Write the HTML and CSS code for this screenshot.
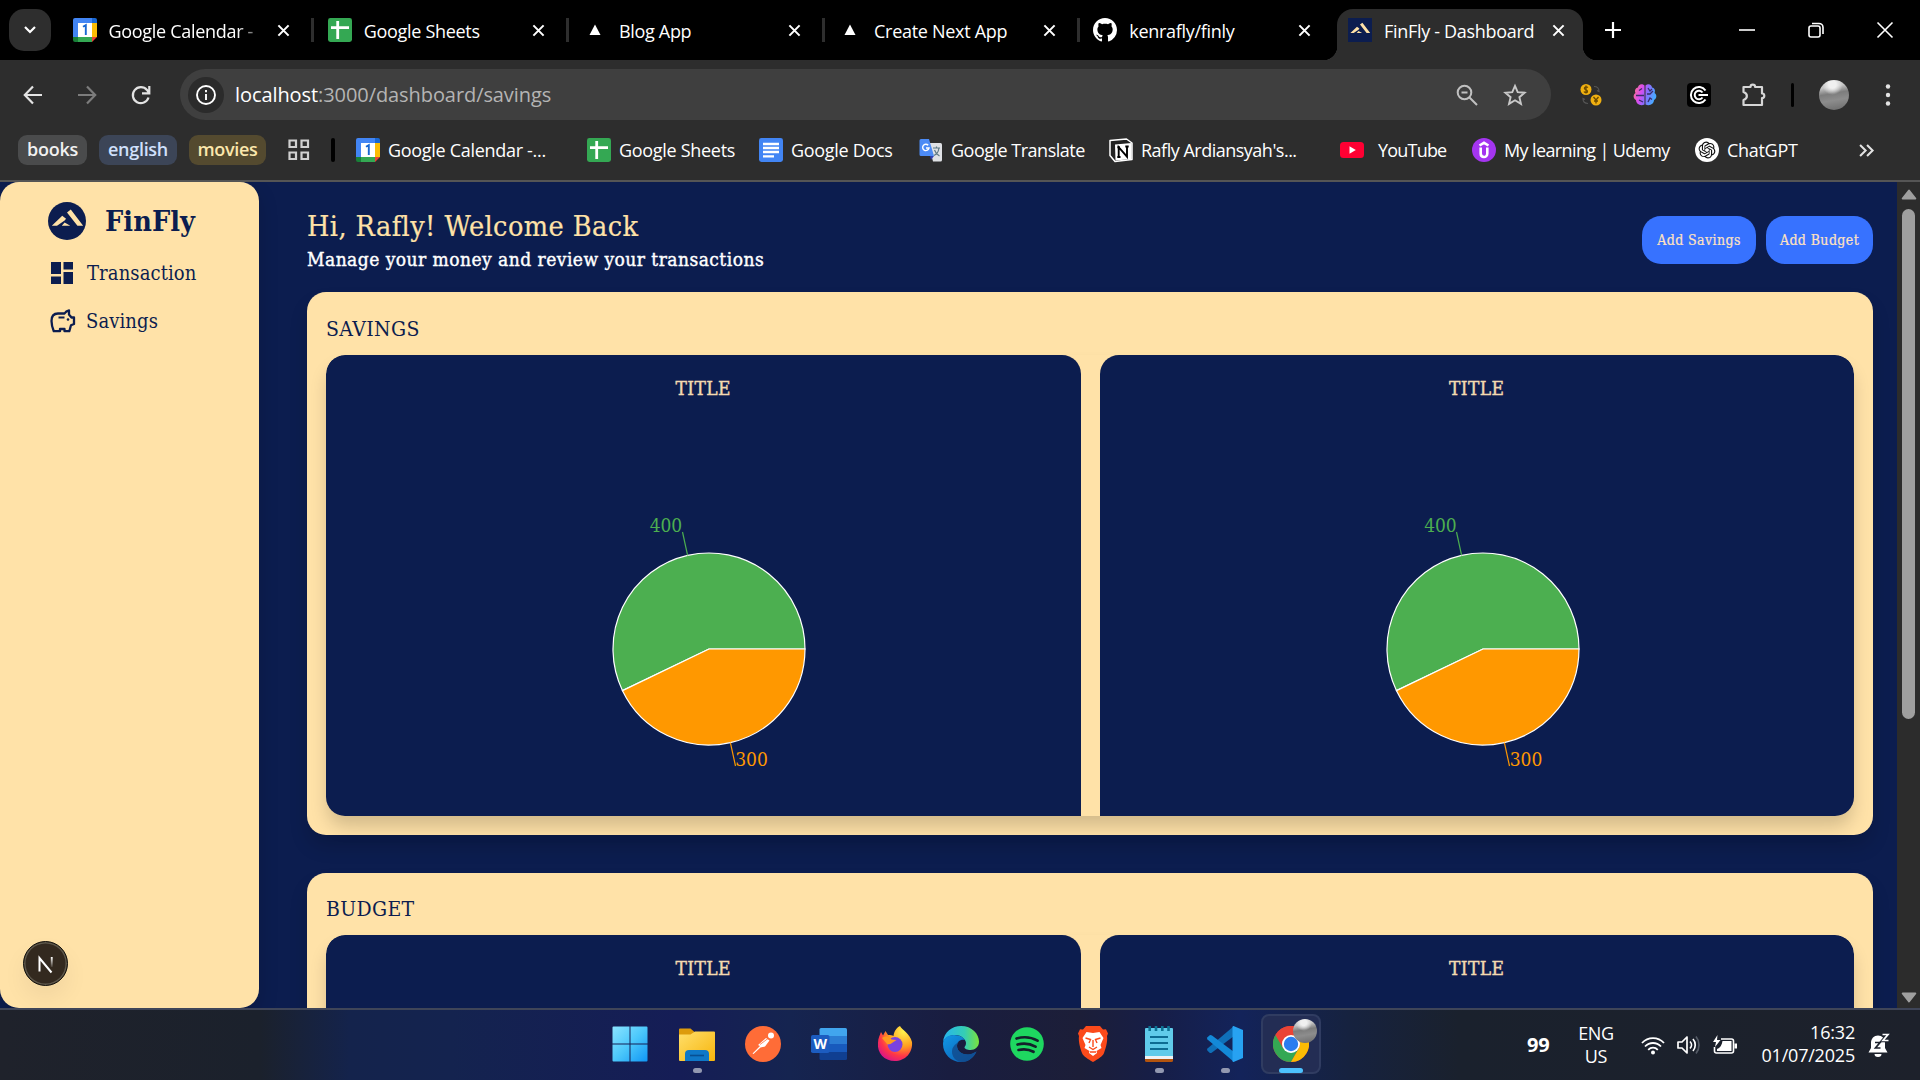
FILE: index.html
```html
<!DOCTYPE html>
<html lang="en">
<head>
<meta charset="utf-8">
<title>FinFly - Dashboard</title>
<link rel="stylesheet" href="styles.css">
</head>
<body>
<svg class="defs" aria-hidden="true">
  <symbol id="i-x" viewBox="0 0 14 14"><path d="M1.500 1.500l11 11M12.500 1.500l-11 11" stroke="#fff" stroke-width="2.200" fill="none"/></symbol>
  <symbol id="i-cal" viewBox="0 0 24 24"><path d="M0 2a2 2 0 0 1 2-2h17v5H5v14H0z" fill="#4285f4"/><path d="M19 0h3a2 2 0 0 1 2 2v3h-5z" fill="#1967d2"/><path d="M19 5h5v14h-5z" fill="#fbbc04"/><path d="M0 19h5v5H2a2 2 0 0 1-2-2z" fill="#188038"/><path d="M5 19h14v5H5z" fill="#34a853"/><path d="M19 19h5l-5 5z" fill="#ea4335"/><path d="M5 5h14v14H5z" fill="#fff"/><path d="M10 8.700l2.800-1.600V17" stroke="#1967d2" stroke-width="1.900" fill="none"/></symbol>
  <symbol id="i-sheets" viewBox="0 0 24 24"><rect width="24" height="24" rx="2.400" fill="#34a853"/><path d="M9.700 3v18M3 9.600h18" stroke="#fff" stroke-width="2.800"/></symbol>
  <symbol id="i-docs" viewBox="0 0 24 24"><rect width="24" height="24" rx="2.400" fill="#4285f4"/><path d="M4 6h16M4 10h16M4 14h16M4 18.400h11" stroke="#fff" stroke-width="2.300"/></symbol>
  <symbol id="i-tri" viewBox="0 0 24 24"><path d="M12 6.500l5.500 10.500h-11z" fill="#fff"/></symbol>
  <symbol id="i-mount" viewBox="0 0 40 40"><path d="M4 25L15 14.500l4 3-1.500 2L9.500 25zM14.500 25l3-3.500 6 3.500zM20 11l4-3 13 17h-6z" fill="#ffe2a8"/></symbol>
  <symbol id="i-chrome" viewBox="0 0 36 36"><circle cx="18" cy="18" r="18" fill="#ea4335"/><path d="M2.400 9A18 18 0 0 0 18 36l8-14-8 4-8-4z" fill="#34a853"/><path d="M33.600 9A18 18 0 0 1 18 36l7.800-13.500A9 9 0 0 0 18 9z" fill="#fbbc04"/><path d="M2.400 9A18 18 0 0 1 33.600 9H18z" fill="#ea4335"/><circle cx="18" cy="18" r="9" fill="#fff"/><circle cx="18" cy="18" r="7.200" fill="#2b7cf0"/></symbol>
  <symbol id="i-pie" viewBox="0 0 240 260">
    <g stroke="#fff" stroke-width="1.200"><path d="M120 140H216A96 96 0 1 0 33.500 181.650z" fill="#4caf50"/><path d="M120 140L33.500 181.650A96 96 0 0 0 216 140z" fill="#ff9800"/></g>
    <path d="M98.600 46.400L93.500 23" stroke="#4caf50" stroke-width="1.200"/><path d="M141.400 233.600L146.500 257" stroke="#ff9800" stroke-width="1.200"/>
  </symbol>
</svg>

<header class="browser">
  <div class="tabstrip">
    <button class="tab-search"><svg width="12" height="8" viewBox="0 0 12 8"><path d="M1 1l5 5 5-5" stroke="#fff" stroke-width="2.200" fill="none"/></svg></button>
    <div class="tabs">
      <div class="tab"><svg class="ico"><use href="#i-cal"/></svg><span class="fade">Google Calendar -</span><svg class="close"><use href="#i-x"/></svg></div>
      <div class="tab"><svg class="ico"><use href="#i-sheets"/></svg><span>Google Sheets</span><svg class="close"><use href="#i-x"/></svg></div>
      <div class="tab"><svg class="ico"><use href="#i-tri"/></svg><span>Blog App</span><svg class="close"><use href="#i-x"/></svg></div>
      <div class="tab"><svg class="ico"><use href="#i-tri"/></svg><span>Create Next App</span><svg class="close"><use href="#i-x"/></svg></div>
      <div class="tab last"><svg class="ico" viewBox="0 0 16 16"><path fill="#fff" d="M8 0C3.580 0 0 3.580 0 8c0 3.540 2.290 6.530 5.470 7.590.4.070.55-.17.55-.38 0-.19-.01-.82-.01-1.490-2.010.37-2.530-.49-2.690-.94-.09-.23-.48-.94-.82-1.130-.28-.15-.68-.52-.01-.53.63-.01 1.080.58 1.230.82.72 1.210 1.870.87 2.330.66.07-.52.28-.87.51-1.070-1.780-.2-3.640-.89-3.640-3.950 0-.87.31-1.590.82-2.150-.08-.2-.36-1.020.08-2.120 0 0 .67-.21 2.200.82.64-.18 1.320-.27 2-.27s1.360.09 2 .27c1.530-1.040 2.200-.82 2.200-.82.44 1.100.16 1.920.08 2.120.51.56.82 1.270.82 2.150 0 3.070-1.870 3.750-3.650 3.950.29.25.54.73.54 1.480 0 1.070-.01 1.930-.01 2.200 0 .21.15.46.55.38A8.010 8.010 0 0 0 16 8c0-4.420-3.580-8-8-8z"/></svg><span>kenrafly/finly</span><svg class="close"><use href="#i-x"/></svg></div>
      <div class="tab active"><svg class="ico navy"><use href="#i-mount"/></svg><span>FinFly - Dashboard</span><svg class="close"><use href="#i-x"/></svg></div>
    </div>
    <svg class="newtab" viewBox="0 0 16 16"><path d="M8 0v16M0 8h16" stroke="#fff" stroke-width="2.200"/></svg>
    <div class="winctl">
      <svg viewBox="0 0 16 16"><path d="M0 8h16" stroke="#fff" stroke-width="1.600"/></svg>
      <svg viewBox="0 0 16 16"><rect x="1" y="4" width="11" height="11" rx="2" fill="none" stroke="#fff" stroke-width="1.600"/><path d="M4 1.500h7a4 4 0 0 1 4 4V12" fill="none" stroke="#fff" stroke-width="1.600"/></svg>
      <svg viewBox="0 0 16 16"><path d="M.5.5l15 15M15.500.5l-15 15" stroke="#fff" stroke-width="1.600"/></svg>
    </div>
  </div>

  <div class="toolbar">
    <div class="nav">
      <svg viewBox="0 0 20 20"><path d="M19 10H2M10 1.500L1.800 10l8.200 8.500" stroke="#e3e3e3" stroke-width="2.200" fill="none"/></svg>
      <svg viewBox="0 0 20 20"><path d="M1 10h17M10 1.500l8.200 8.500-8.200 8.500" stroke="#7c7c7c" stroke-width="2.200" fill="none"/></svg>
      <svg viewBox="0 0 20 20"><path d="M17.500 12.500A8 8 0 1 1 16 5l2 3M18.300 1v7.300H11" stroke="#e3e3e3" stroke-width="2.200" fill="none"/></svg>
    </div>
    <div class="omnibox">
      <span class="info"><svg width="20" height="20" viewBox="0 0 20 20"><circle cx="10" cy="10" r="9" fill="none" stroke="#fff" stroke-width="1.900"/><path d="M10 9v6M10 5v2.200" stroke="#fff" stroke-width="1.900"/></svg></span>
      <span class="url"><b>localhost</b>:3000/dashboard/savings</span>
      <svg class="zoomico" width="22" height="22" viewBox="0 0 22 22"><circle cx="8.500" cy="8.500" r="6.800" fill="none" stroke="#c0c0c0" stroke-width="2"/><path d="M13.500 13.500l7.500 7.500M5.500 8.500h6" stroke="#c0c0c0" stroke-width="2"/></svg>
      <svg width="24" height="24" viewBox="0 0 24 24"><path d="M12 2.800l2.700 6.300 6.900.6-5.200 4.500 1.600 6.700-6-3.600-6 3.600 1.600-6.700-5.200-4.500 6.900-.6z" fill="none" stroke="#c8c8c8" stroke-width="1.900"/></svg>
    </div>
    <div class="exts">
      <svg viewBox="0 0 24 24"><circle cx="7" cy="6.500" r="5.500" fill="#f0b010"/><circle cx="17" cy="17" r="5.500" fill="#f0b010"/><path d="M9 4.500C7.500 3.500 5 4 5.500 5.500S9 7 8.500 8.700 5.500 9.500 5 8.500M7 2.500v8M14.500 14l2.500 3 2.500-3M17 17v3.500M15 18h4" stroke="#6b4a00" stroke-width="1.300" fill="none"/><path d="M15 3.500c3 0 5 2 5 5l-2-1M9 20.500c-3 0-5-2-5-5l2 1" stroke="#555" stroke-width="1.200" fill="none"/></svg>
      <svg viewBox="0 0 24 24"><defs><linearGradient id="br" x2="1" y2=".3"><stop offset="0" stop-color="#ff7a7a"/><stop offset=".4" stop-color="#d94cf0"/><stop offset=".65" stop-color="#8b6cff"/><stop offset="1" stop-color="#4aa8ff"/></linearGradient></defs><path d="M11.500 2.500C9 0 5 1.500 5 4.500 2 5 1.500 8 2.500 10-.5 12 .5 16 3 17c0 4 4.500 6.500 8.500 4.500zM12.500 2.500C15 0 19 1.500 19 4.500c3 .5 3.500 3.500 2.500 5.500 3 2 2 6-.5 7 0 4-4.500 6.500-8.500 4.500z" fill="url(#br)"/><path d="M3 12.500h8M6 7.500l3-2M6 17l4 2M14 11h3l3-3M15 19l2-4 2 1.500M15 5l2 3 2-2" stroke="#3a2c6b" stroke-width="1.300" fill="none"/></svg>
      <svg viewBox="0 0 24 24"><rect width="24" height="24" rx="4" fill="#000"/><path d="M18.500 7.500a8 8 0 1 0 0 9" stroke="#fff" stroke-width="2" fill="none"/><path d="M15.500 9.500a4.300 4.300 0 1 0 0 5M11.500 12H21" stroke="#fff" stroke-width="2" fill="none"/></svg>
      <svg viewBox="0 0 24 24"><path d="M3 4h6.500a2.300 2.300 0 0 1 4.600 0H21v6.500a2.300 2.300 0 0 1 0 4.600V22H2.500v-5c4.500-1.500 4.500-6.500 0-8V4z" fill="none" stroke="#d6d6d6" stroke-width="2.200" stroke-linejoin="round"/></svg>
      <i class="bar"></i>
      <i class="avatar"></i>
      <svg class="dots" viewBox="0 0 6 24"><circle cx="3" cy="3.500" r="2.200"/><circle cx="3" cy="12" r="2.200"/><circle cx="3" cy="20.500" r="2.200"/></svg>
    </div>
  </div>

  <nav class="bookmarks">
    <span class="chip c1">books</span><span class="chip c2">english</span><span class="chip c3">movies</span>
    <svg class="apps" viewBox="0 0 22 22"><g fill="none" stroke="#d0d0d0" stroke-width="2.200"><path d="M1.500 1.500h6.500v6.500H1.500zM13.500 1.500H20v6.500h-6.500zM1.500 13.500h6.500V20H1.500zM13.500 13.500H20V20h-6.500z"/></g></svg>
    <i class="bar"></i>
    <div class="links">
      <a><svg class="ico"><use href="#i-cal"/></svg><span>Google Calendar -...</span></a>
      <a><svg class="ico"><use href="#i-sheets"/></svg><span>Google Sheets</span></a>
      <a><svg class="ico"><use href="#i-docs"/></svg><span>Google Docs</span></a>
      <a class="tight"><svg class="ico" viewBox="0 0 24 24"><path d="M9 5h12.500a1.500 1.500 0 0 1 1.500 1.500V22a1.500 1.500 0 0 1-1.500 1.500H14z" fill="#dfe1e5"/><path d="M14 10h7M17.500 8.500V10M15 17.500c3-1.500 4.500-4 4.800-7M15.500 12c1 3 3 5 5 6" stroke="#5f7a86" stroke-width="1.200" fill="none"/><path d="M2 1h8l5 17H2a1.500 1.500 0 0 1-1.500-1.500v-14A1.500 1.500 0 0 1 2 1z" fill="#4c8bf5"/><path d="M11 18h4l-3 4z" fill="#3040b0"/><path d="M9.200 7.200A3.200 3.200 0 1 0 10 10H7" stroke="#fff" stroke-width="1.400" fill="none"/></svg><span>Google Translate</span></a>
      <a class="tight"><svg class="ico" viewBox="0 0 24 24"><path d="M1 2.500L17.500 1 23 5v16.500L6 23.500l-5-6z" fill="#222" stroke="#fff" stroke-width="1.500" stroke-linejoin="round"/><path d="M6 6.500L22.500 5v16L6.500 22.500z" fill="#fff"/><path d="M9.700 19V9.200l8.300 9.500V8.500M8.300 9.200H11M8.300 19h3.200M16.300 8.500h3.400" stroke="#000" stroke-width="1.900" fill="none"/></svg><span>Rafly Ardiansyah's...</span></a>
      <a class="yt"><svg class="ico" viewBox="0 0 24 24"><rect y="4" width="24" height="16" rx="3.500" fill="#ff0033"/><path d="M9.500 8.300v7.400l6.300-3.700z" fill="#fff"/></svg><span>YouTube</span></a>
      <a class="tighter"><svg class="ico" viewBox="0 0 24 24"><circle cx="12" cy="12" r="12" fill="#a435f0"/><path d="M7.500 7.500L12 4.800l4.500 2.700M8.700 9.500v6c0 4.600 6.600 4.600 6.600 0v-6" stroke="#fff" stroke-width="2.600" fill="none"/></svg><span>My learning | Udemy</span></a>
      <a><svg class="ico" viewBox="0 0 24 24"><circle cx="12" cy="12" r="12" fill="#fff"/><path transform="translate(3.600 3.600) scale(.7)" fill="#111" d="M22.2819 9.8211a5.9847 5.9847 0 0 0-.5157-4.9108 6.0462 6.0462 0 0 0-6.5098-2.9A6.0651 6.0651 0 0 0 4.9807 4.1818a5.9847 5.9847 0 0 0-3.9977 2.9 6.0462 6.0462 0 0 0 .7427 7.0966 5.98 5.98 0 0 0 .511 4.9107 6.051 6.051 0 0 0 6.5146 2.9001A5.9847 5.9847 0 0 0 13.2599 24a6.0557 6.0557 0 0 0 5.7718-4.2058 5.9894 5.9894 0 0 0 3.9977-2.9001 6.0557 6.0557 0 0 0-.7475-7.0729zm-9.022 12.6081a4.4755 4.4755 0 0 1-2.8764-1.0408l.1419-.0804 4.7783-2.7582a.7948.7948 0 0 0 .3927-.6813v-6.7369l2.02 1.1686a.071.071 0 0 1 .038.052v5.5826a4.504 4.504 0 0 1-4.4945 4.4944zm-9.6607-4.1254a4.4708 4.4708 0 0 1-.5346-3.0137l.142.0852 4.783 2.7582a.7712.7712 0 0 0 .7806 0l5.8428-3.3685v2.3324a.0804.0804 0 0 1-.0332.0615L9.74 19.9502a4.4992 4.4992 0 0 1-6.1408-1.6464zM2.3408 7.8956a4.485 4.485 0 0 1 2.3655-1.9728V11.6a.7664.7664 0 0 0 .3879.6765l5.8144 3.3543-2.0201 1.1685a.0757.0757 0 0 1-.071 0l-4.8303-2.7865A4.504 4.504 0 0 1 2.3408 7.872zm16.5963 3.8558L13.1038 8.364 15.1192 7.2a.0757.0757 0 0 1 .071 0l4.8303 2.7913a4.4944 4.4944 0 0 1-.6765 8.1042v-5.6772a.79.79 0 0 0-.407-.667zm2.0107-3.0231l-.142-.0852-4.7735-2.7818a.7759.7759 0 0 0-.7854 0L9.409 9.2297V6.8974a.0662.0662 0 0 1 .0284-.0615l4.8303-2.7866a4.4992 4.4992 0 0 1 6.6802 4.66zM8.3065 12.863l-2.02-1.1638a.0804.0804 0 0 1-.038-.0567V6.0742a4.4992 4.4992 0 0 1 7.3757-3.4537l-.142.0805L8.704 5.459a.7948.7948 0 0 0-.3927.6813zm1.0976-2.3654l2.602-1.4998 2.6069 1.4998v2.9994l-2.5974 1.4997-2.6067-1.4997Z"/></svg><span>ChatGPT</span></a>
    </div>
    <svg class="more" viewBox="0 0 14 12"><path d="M1 .8l5.200 5.200L1 11.200M7.500.8l5.200 5.200-5.200 5.200" stroke="#e3e3e3" stroke-width="1.900" fill="none"/></svg>
  </nav>
</header>

<div class="viewport">
  <aside class="sidebar">
    <div class="brand"><svg class="logo"><use href="#i-mount"/></svg><span>FinFly</span></div>
    <a class="item"><svg width="22" height="22" viewBox="0 0 22 22"><path d="M0 0h10v12H0zM12.500 0H22v7.500h-9.500zM0 14.500h10V22H0zM12.500 10H22v12h-9.500z" fill="#0c1d4f"/></svg><span>Transaction</span></a>
    <a class="item"><svg width="26" height="24" viewBox="0 0 26 24"><path d="M3.800 22.200C2.500 19 1.500 15.500 1.500 12 1.500 7 4 4.500 8 4.500h6.500c1-1.700 2.500-2.700 4.500-3v4l2.500 3H24V15l-3 1.200-1.700 6H14.500v-2.200H10v2.200z" fill="none" stroke="#0c1d4f" stroke-width="2.300" stroke-linejoin="round"/><path d="M8.500 8.500h6" stroke="#0c1d4f" stroke-width="2"/><circle cx="18" cy="10.500" r="1.300" fill="#0c1d4f"/></svg><span>Savings</span></a>
    <div class="next"><svg width="18" height="18" viewBox="0 0 18 18"><defs><linearGradient id="nf" x2="0" y2="1"><stop offset="0" stop-color="#fff"/><stop offset="1" stop-color="#fff" stop-opacity=".1"/></linearGradient></defs><path d="M2.500 16.500V3L14.500 17.500" fill="none" stroke="#fff" stroke-width="2"/><path d="M13.800 2h1.900v10h-1.900z" fill="url(#nf)"/></svg></div>
  </aside>

  <main class="main">
    <div class="top">
      <div>
        <h1>Hi, Rafly! Welcome Back</h1>
        <p>Manage your money and review your transactions</p>
      </div>
      <div class="actions"><button class="btn b1">Add Savings</button><button class="btn b2">Add Budget</button></div>
    </div>

    <section class="card">
      <h2>SAVINGS</h2>
      <div class="panels">
        <article class="panel"><h3>TITLE</h3><div class="chart"><svg class="pie"><use href="#i-pie"/></svg><span class="v green">400</span><span class="v orange">300</span></div></article>
        <article class="panel"><h3>TITLE</h3><div class="chart"><svg class="pie"><use href="#i-pie"/></svg><span class="v green">400</span><span class="v orange">300</span></div></article>
      </div>
    </section>

    <section class="card">
      <h2 class="bud">BUDGET</h2>
      <div class="panels">
        <article class="panel"><h3>TITLE</h3></article>
        <article class="panel"><h3>TITLE</h3></article>
      </div>
    </section>
  </main>

  <div class="scrollbar">
    <svg width="16" height="11" viewBox="0 0 16 11"><path d="M8 1.500L14.300 9.500H1.700z" fill="#9f9f9f" stroke="#9f9f9f" stroke-width="2" stroke-linejoin="round"/></svg>
    <i class="thumb"></i>
    <svg class="down" width="16" height="11" viewBox="0 0 16 11"><path d="M8 9.500L1.700 1.500h12.600z" fill="#9f9f9f" stroke="#9f9f9f" stroke-width="2" stroke-linejoin="round"/></svg>
  </div>
</div>

<footer class="taskbar">
  <div class="pinned">
    <div class="app start"><svg viewBox="0 0 36 36"><defs><linearGradient id="wn" x2="1" y2="1"><stop offset="0" stop-color="#8be4ff"/><stop offset=".5" stop-color="#4cc8fb"/><stop offset="1" stop-color="#1096f5"/></linearGradient></defs><path d="M1.500.5h16v17H.5v-16a1 1 0 0 1 1-1zM18.500.5h16a1 1 0 0 1 1 1v16h-17zM.5 18.500h17v17h-16a1 1 0 0 1-1-1zM18.500 18.500h17v16a1 1 0 0 1-1 1h-16z" fill="url(#wn)"/></svg></div>
    <div class="app run"><svg viewBox="0 0 36 36"><defs><linearGradient id="fo" x2="1" y2="1"><stop offset="0" stop-color="#ffdf6b"/><stop offset="1" stop-color="#f7b50c"/></linearGradient></defs><path d="M0 3.500a1 1 0 0 1 1-1h10.500l4 3.500-4 5H0z" fill="#dd9b0c"/><path d="M0 8.500h11.500L16 5.500h19a1 1 0 0 1 1 1V34a1 1 0 0 1-1 1H1a1 1 0 0 1-1-1z" fill="url(#fo)"/><path d="M6 35V28a4 4 0 0 1 4-4h16a4 4 0 0 1 4 4v7z" fill="#0f78c8"/><path d="M11 29.500h14" stroke="#084f92" stroke-width="1.600"/></svg></div>
    <div class="app"><svg viewBox="0 0 36 36"><circle cx="18" cy="18" r="18" fill="#ff6c37"/><circle cx="26" cy="9.500" r="3" fill="#fff"/><path d="M7.500 27.500l7.500-7.500-2-1 8-7 3.500 2.500-4.500 6-4.500 1-7 6.500z" fill="#fff"/><path d="M15 18.500l8-6" stroke="#ff6c37" stroke-width=".8"/></svg></div>
    <div class="app"><svg viewBox="0 0 36 36"><path d="M10 2h24.500a1.500 1.500 0 0 1 1.500 1.500V10H8.500V3.500A1.500 1.500 0 0 1 10 2z" fill="#41a5ee"/><path d="M8.500 10H36v8H8.500z" fill="#2b7cd3"/><path d="M8.500 18H36v8H8.500z" fill="#185abd"/><path d="M8.500 26H36v6.500a1.500 1.500 0 0 1-1.500 1.500H10a1.500 1.500 0 0 1-1.500-1.500z" fill="#103f91"/><rect y="9" width="18.500" height="18" rx="1.800" fill="#1c5cc0"/><text x="9.200" y="23" class="w" text-anchor="middle">W</text></svg></div>
    <div class="app"><svg viewBox="0 0 36 36"><defs><radialGradient id="ff" cx=".75" cy=".15" r=".95"><stop offset="0" stop-color="#fff44f"/><stop offset=".45" stop-color="#ffa01f"/><stop offset=".75" stop-color="#ff3647"/><stop offset="1" stop-color="#d8148a"/></radialGradient></defs><path d="M23 0c2 4 10 7.500 12 16C36 27 28 35 18 35 7 35 0 27 1 17 1 12 3 9 4 6l2 3.500L8.500 5l2.500 4c3 0 4 0 5.500 1C17 6 19 2 23 0z" fill="url(#ff)"/><circle cx="18" cy="18.500" r="7.500" fill="#7a42e0"/><path d="M5 12c4-3 8-1 9.500 1.500l5 .5-6 4-3 .5z" fill="#ff9a1f"/></svg></div>
    <div class="app"><svg viewBox="0 0 36 36"><defs><linearGradient id="eg" x1="0" x2="1"><stop offset="0" stop-color="#27b5ee"/><stop offset=".6" stop-color="#35cdb4"/><stop offset="1" stop-color="#7ae23c"/></linearGradient><linearGradient id="eb" x2="1" y2="1"><stop offset="0" stop-color="#1198e6"/><stop offset="1" stop-color="#0b58ae"/></linearGradient></defs><path d="M0 16C1 6 9 0 18 0c11 0 18 8 18 15.500 0 5.500-4 8.500-8.500 8.500-3.500 0-6-1.500-6-2.500s1.500-1.500 1.500-4.500S19 9 12 9C5 9 1 13 0 16z" fill="url(#eg)"/><path d="M0 18C0 12 5 9 11 9s10 3 11 5c-5-1-8 2-8 6 0 5 5 8.500 11 8.500 3.500 0 6-1.500 8.500-3C31 31 26 36 18 36 8 36 0 28 0 18z" fill="url(#eb)"/><path d="M14 20c0 5 5 8.500 11 8.500 3.500 0 6-1.500 8.500-3C30 33 23 36.500 18 36c-6-1-9-6-9-10 0-5 3-8 7-10-1 1-2 2-2 4z" fill="#114a8b" opacity=".8"/></svg></div>
    <div class="app"><svg viewBox="0 0 36 36"><circle cx="18" cy="18" r="16.800" fill="#1ed760"/><path d="M7.500 12.500c7-2 15-1.300 21 2.200M8.500 18.500c6-1.500 12.500-1 18 2.200M9.500 24c5-1.200 10.500-.7 15 1.800" stroke="#14202a" stroke-width="2.700" stroke-linecap="round" fill="none"/></svg></div>
    <div class="app"><svg viewBox="0 0 36 36"><path d="M11 0h14l3 3.500 3-.3 2 4.300-1 2.500c1 6-2 14-3 17-1 3-6 6-11 9-5-3-10-6-11-9C6 24 3 16 4 10L3 7.500l2-4.300 3 .3z" fill="#fb4a1b"/><path d="M11.500 6L18 7l6.500-1 4 6-3 7 1 3-5 3 .5 2L18 30l-4-3 .5-2-5-3 1-3-3-7z" fill="#fff"/><path d="M10.500 12l5 1.500L14 17M25.500 12l-5 1.500L22 17M18 14v7M14 21l4 2.500 4-2.500M15 26h6" stroke="#fb4a1b" stroke-width="1.400" fill="none"/></svg></div>
    <div class="app run"><svg viewBox="0 0 36 36"><path d="M4 30h28v4.500a1.500 1.500 0 0 1-1.500 1.500h-25A1.500 1.500 0 0 1 4 34.500z" fill="#b3540e"/><path d="M4 29h28v4H4z" fill="#eef2f5"/><path d="M5 2h26a1 1 0 0 1 1 1v27H4V3a1 1 0 0 1 1-1z" fill="#60cbea"/><path d="M9 11h18M9 17h18M9 23h18" stroke="#0d6c93" stroke-width="1.900"/><path d="M8.700 0v5M15 0v5M21.300 0v5M27.500 0v5" stroke="#0d7394" stroke-width="2.600"/></svg></div>
    <div class="app run"><svg viewBox="0 0 36 36"><path d="M27 0v10L5 26.500q-1.500 1-2.700 0L.5 24.800q-1-1.200 0-2.200z" fill="#0f6fb8"/><path d="M27 36V26L5 9.500q-1.500-1-2.700 0L.5 11.200q-1 1.200 0 2.200z" fill="#1389d8"/><path d="M26.500 0L36 4v28l-9.500 4q-1 0-1-1V1q0-1 1-1z" fill="#27a2f2"/></svg></div>
    <div class="app run focus"><svg viewBox="0 0 36 36"><use href="#i-chrome"/></svg><i class="avatar mini"></i></div>
  </div>
  <div class="tray">
    <span class="n99">99</span>
    <span class="lang">ENG<br>US</span>
    <span class="sys">
      <svg viewBox="0 0 24 20"><g fill="none" stroke="#fff" stroke-width="1.800"><path d="M1 8C7 1.500 17 1.500 23 8M4 11.500c4.500-4.700 11.500-4.700 16 0M7.200 14.800c2.700-2.800 6.900-2.800 9.600 0"/></g><circle cx="12" cy="17.500" r="2" fill="#fff"/></svg>
      <svg viewBox="0 0 24 20"><path d="M1 7h4l5-5v16l-5-5H1z" fill="none" stroke="#fff" stroke-width="1.700" stroke-linejoin="round"/><path d="M13 6.500c2 2 2 5 0 7M16 4c3 3.500 3 8.500 0 12" fill="none" stroke="#fff" stroke-width="1.700"/><path d="M19 1.500c4 5 4 12 0 17" fill="none" stroke="#555b66" stroke-width="1.700"/></svg>
      <svg viewBox="0 0 24 20"><path d="M8 4h10.500a2 2 0 0 1 2 2v10a2 2 0 0 1-2 2H3.500a2 2 0 0 1-2-2v-4" fill="none" stroke="#fff" stroke-width="1.600"/><path d="M9.500 6H18.500v10H4v-2c3-1 5-4 5.500-8z" fill="#fff"/><path d="M21.500 8.500H24v5h-2.500z" fill="#fff"/><path d="M4.500 0L0 7h3l-1 5 5.500-7H4z" fill="#fff"/></svg>
    </span>
    <span class="clock">16:32<br>01/07/2025</span>
    <svg class="bell" viewBox="0 0 22 24"><path d="M3 10c0-4.500 3-7.500 7-7.500s7 3 7 7.500v5l2.500 4.500H.5L3 15z" fill="#fff"/><path d="M6.500 21h7a3.500 3 0 0 1-7 0z" fill="#fff"/><path d="M7 9.500h5L7.500 15h5" stroke="#1c212c" stroke-width="1.700" fill="none"/><path d="M14.500 1.500h5.500l-5 6h5.500" stroke="#1c212c" stroke-width="3.600" fill="none"/><path d="M14.500 1.500h5.500l-5 6h5.500" stroke="#fff" stroke-width="1.700" fill="none"/></svg>
  </div>
</footer>
</body>
</html>
```
FILE: styles.css
```css
* { box-sizing: border-box; }
body {
  margin: 0;
  width: 1920px;
  height: 1080px;
  overflow: hidden;
  display: flex;
  flex-direction: column;
  background: #000;
  color: #fff;
  font-family: "Open Sans", "Noto Sans", sans-serif;
  font-stretch: 90%;
}
.defs { display: none; }
svg { display: block; flex: none; overflow: visible; }
h1, h2, h3, p { margin: 0; font-weight: 400; }
button { border: 0; padding: 0; font: inherit; color: inherit; }
.ico { width: 24px; height: 24px; }
.bar { width: 4px; height: 24px; background: #000; border-radius: 2px; flex: none; }

/* browser chrome */
.browser { height: 182px; flex: none; background: #2d2d2d; border-bottom: 2px solid #555; }
.tabstrip { height: 60px; background: #000; display: flex; align-items: center; padding-left: 9px; }
.tab-search { width: 42px; height: 42px; border-radius: 15px; background: #2e2e2e; display: grid; place-items: center; margin-right: 8px; }
.tabs { display: grid; grid-template-columns: repeat(6, 255.200px); height: 60px; }
.tab { display: flex; align-items: center; padding: 0 21px 0 13.500px; border-right: 3px solid #2e2e2e; border-image: linear-gradient(#000 18px, #2e2e2e 18px 42px, #000 42px) 1; font-size: 18px; white-space: nowrap; letter-spacing: -.3px; }
.tab span { margin-left: 12px; flex: 1; overflow: hidden; line-height: 28px; padding-top: 2px; }
.tab .close { width: 13px; height: 13px; margin-left: 8px; }
.tab.last { border-color: transparent; border-image: none; }
.fade { -webkit-mask-image: linear-gradient(90deg, #000 80%, transparent 98%); mask-image: linear-gradient(90deg, #000 80%, transparent 98%); }
.tab.active { border: 0; margin: 9px 7px 0 2px; padding: 0 18px 9px 11px; background: #2d2d2d; border-radius: 16px 16px 0 0; position: relative; }
.tab.active::before, .tab.active::after { content: ""; position: absolute; bottom: 0; width: 14px; height: 14px; }
.tab.active::before { left: -14px; background: radial-gradient(circle at 0 0, transparent 14px, #2d2d2d 14.500px); }
.tab.active::after { right: -14px; background: radial-gradient(circle at 100% 0, transparent 14px, #2d2d2d 14.500px); }
.navy { background: #0c1d4f; }
.newtab { width: 16px; height: 16px; margin-left: 15px; }
.winctl { margin-left: auto; display: flex; gap: 53px; padding-right: 27px; }
.winctl svg { width: 16px; height: 16px; }

.toolbar { height: 69px; display: flex; align-items: center; background: #2d2d2d; }
.nav { display: flex; gap: 34px; padding-left: 23px; width: 180px; }
.nav svg { width: 20px; height: 20px; }
.omnibox { width: 1371px; height: 51px; border-radius: 26px; background: #3f3f3f; display: flex; align-items: center; padding: 0 24px 0 8px; }
.info { width: 36px; height: 36px; border-radius: 50%; background: #2b2b2b; display: grid; place-items: center; }
.url { flex: 1; margin-left: 11px; color: #b4b4b4; font-size: 20px; letter-spacing: -.08px; }
.url b { font-weight: 400; color: #fff; }
.zoomico { margin-right: 25px; }
.exts { flex: 1; display: flex; align-items: center; padding-left: 28px; }
.exts svg { width: 24px; height: 24px; margin-right: 30px; }
.exts .bar { margin: 0 25px 0 -4px; width: 3px; }
.avatar { width: 30px; height: 30px; border-radius: 50%; flex: none; background: radial-gradient(circle at 45% 15%, #f0f0f0 0 12%, transparent 34%), linear-gradient(170deg, #c4c4c4 25%, #7d7d7d 45%, #8d8d8d 65%, #6a6a6a); }
.exts .dots { width: 6px; fill: #e3e3e3; margin: 0 0 0 36px; }

.bookmarks { display: flex; align-items: center; height: 30px; margin-top: 6px; padding-left: 18px; font-size: 18px; letter-spacing: -.3px; white-space: nowrap; }
.chip { height: 30px; border-radius: 9px; margin-right: 12px; font-weight: 600; line-height: 29px; text-align: center; }
.c1 { width: 69px; background: #4a4b4c; color: #f1f1f1; }
.c2 { width: 78px; background: #3c4557; color: #d0e0fc; }
.c3 { width: 77px; background: #544a2f; color: #fbe7ac; }
.apps { width: 22px; height: 22px; margin: 0 21px 0 10px; }
.links { display: grid; grid-template-columns: 231px 172px 160px 190px 231px 132px 223px 140px; margin-left: 21px; }
.links a { display: flex; align-items: center; gap: 8px; }
.links span { line-height: 24px; padding-bottom: 1px; }
.links .tight { letter-spacing: -.5px; }
.links .tighter { letter-spacing: -.62px; }
.links .yt { gap: 14px; letter-spacing: -.8px; }
.more { width: 15px; height: 13px; margin-left: 24px; }

/* page */
.viewport { height: 826px; flex: none; display: flex; background: #0c1d4f; overflow: hidden; color: #0c1d4f; font-family: "Roboto Slab", "DejaVu Serif Condensed", "DejaVu Serif", serif; font-stretch: condensed; }
.sidebar { width: 259px; border-radius: 19px; background: #ffe2a8; padding: 19px 0 0 48px; display: flex; flex-direction: column; box-shadow: 0 8px 20px rgba(0, 0, 0, .15); }
.brand { display: flex; align-items: center; gap: 19px; font-weight: 700; font-size: 28.500px; height: 39px; letter-spacing: .1px; }
.logo { width: 38px; height: 38px; border-radius: 50%; background: #0c1d4f; }
.item { display: flex; align-items: center; height: 48px; font-size: 20px; letter-spacing: .1px; }
.brand + .item { margin-top: 9px; }
.item svg { margin-left: 3px; margin-right: 14px; }
.item:nth-child(3) svg { margin-left: 2px; margin-right: 10px; }
.next { margin: auto 0 22px -25px; width: 45px; height: 45px; border-radius: 50%; background: #33291f; border: 1px solid #15130f; box-shadow: inset 0 0 0 1.500px #5e584c, 0 12px 24px rgba(0, 0, 0, .06); display: grid; place-items: center; }

.main { flex: 1; padding: 26px 24px 0 48px; }
.top { display: flex; justify-content: space-between; height: 84px; }
h1 { font-size: 28.500px; line-height: 37px; color: #ffe2a8; letter-spacing: .43px; -webkit-text-stroke: .2px; }
.top p { font-size: 19px; line-height: 28px; color: #fff; white-space: nowrap; letter-spacing: .47px; -webkit-text-stroke: .4px; }
.actions { display: flex; gap: 10px; padding-top: 8px; }
.btn { height: 48px; border-radius: 19px; background: #3772ff; color: #ffe2c0; font-size: 14px; letter-spacing: .4px; -webkit-text-stroke: .2px; }
.b1 { width: 114px; }
.b2 { width: 107px; }
.card { height: 543px; border-radius: 19px; background: #ffe2a8; padding: 0 19px; margin-bottom: 38px; box-shadow: 0 12px 18px rgba(0, 0, 0, .15); }
h2 { font-size: 21px; line-height: 30px; padding-top: 22px; height: 62.500px; letter-spacing: .35px; }
.bud { height: 61.500px; padding-top: 21px; }
.panels { display: grid; grid-template-columns: 1fr 1fr; gap: 19px; height: 461px; overflow: hidden; border-radius: 19px; }
.card .panels { box-shadow: 0 12px 18px -2px rgba(0, 0, 0, .18); }
.panel { height: 500px; border-radius: 19px; background: #0c1d4f; padding-top: 20px; }
h3 { font-size: 19px; line-height: 27px; text-align: center; color: #f3dab0; letter-spacing: .4px; -webkit-text-stroke: .4px; }
.chart { width: 240px; height: 260px; margin: 107px auto 0; position: relative; left: 5.500px; font-size: 19px; line-height: 24px; }
.panel + .panel .chart { left: 6.500px; }
.pie { width: 240px; height: 260px; }
.v { position: absolute; }
.green { right: 146.500px; top: 4px; color: #4caf50; }
.orange { left: 146.500px; top: 238px; color: #ff9800; }
.scrollbar { width: 23px; background: #2c2c2c; padding: 7px 0 5px; display: flex; flex-direction: column; align-items: center; }
.thumb { width: 13px; height: 510px; border-radius: 7px; background: #9f9f9f; margin-top: 9px; }
.down { margin-top: auto; }

/* taskbar */
.taskbar { height: 72px; flex: none; display: flex; border-top: 2px solid #3f4558; background: linear-gradient(90deg, #1f222b 0, #1b212c 260px, #14234c 350px, #14234f 450px, #151d56 680px, #152450 790px, #191d40 950px, #1c1e38 1080px, #161e48 1160px, #13235a 1240px, #16223f 1350px, #1a212d 1460px, #1d212b 1920px); }
.pinned { display: flex; margin-left: 596.500px; align-items: center; }
.app { width: 66px; height: 70px; display: flex; justify-content: center; padding-top: 16px; position: relative; }
.start { margin-right: 1.500px; }
.app svg { width: 36px; height: 36px; }
.run::after { content: ""; position: absolute; left: 29px; bottom: 7px; width: 9px; height: 5px; border-radius: 3px; background: #9298b0; }
.focus { width: 60px; height: 60px; margin: 0 0 2px 3px; border-radius: 8px; border: 2px solid #303c61; background: #232d54; padding-top: 10px; }
.focus::after { left: 16px; width: 24px; bottom: -1px; background: #4cc2ff; }
.mini { position: absolute; width: 24px; height: 24px; left: 30px; top: 3px; }
.w { font: 700 14px "Open Sans", sans-serif; fill: #fff; }
.tray { margin-left: auto; display: flex; align-items: center; width: 393px; font-size: 18px; line-height: 23px; letter-spacing: -.3px; }
.n99 { width: 24px; font-weight: 700; font-size: 20px; padding-bottom: 2px; }
.lang { width: 50px; margin-left: 20px; text-align: center; padding-bottom: 1px; }
.sys { display: flex; gap: 12px; margin-left: 20px; }
.sys svg { width: 24px; height: 20px; }
.clock { flex: 1; text-align: right; padding: 0 13px 2px 0; letter-spacing: -.2px; }
.bell { width: 22px; height: 24px; margin-right: 30px; }
```
